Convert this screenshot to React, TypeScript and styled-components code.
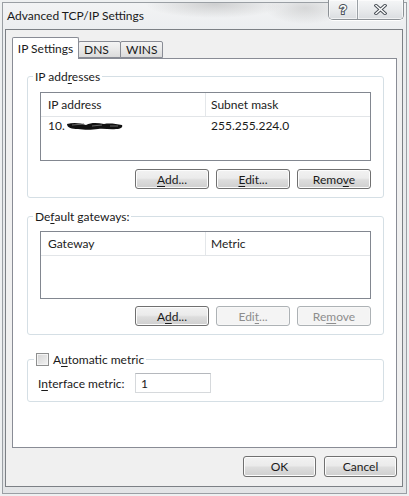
import React from "react";
import styled, { createGlobalStyle } from "styled-components";

const Global = createGlobalStyle`
  html, body { margin: 0; padding: 0; }
  body {
    width: 409px; height: 496px; overflow: hidden;
    background: #e6e8ea;
    font-family: Lato, "Liberation Sans", sans-serif;
    font-size: 12px; color: #1a1a1a;
  }
  * { box-sizing: border-box; }
`;

const Window = styled.div`
  width: 409px; height: 496px;
  display: flex; flex-direction: column;
  background:
    radial-gradient(ellipse 70px 14px at 215px 4px, rgba(140,140,140,0.35), transparent),
    radial-gradient(ellipse 40px 16px at 305px 8px, rgba(150,150,150,0.3), transparent),
    linear-gradient(180deg, #f3f4f5 0%, #eceef0 30px, #e2e4e6 100%);
  box-shadow: inset 0 0 0 2px #eef0f1, inset 0 0 0 3px #9a9fa4;
`;

const TitleBar = styled.div`
  height: 29px; display: flex; align-items: center; padding-left: 7px;
`;

const Title = styled.span`
  font-size: 12px; color: #1a1a1a; margin-top: 1px;
`;

const CaptionGroup = styled.div`
  display: flex; align-self: flex-start; margin-left: auto; margin-right: 5px;
  border: 1px solid #8c9196; border-top: none; border-radius: 0 0 5px 5px;
  overflow: hidden; box-shadow: 0 1px 0 rgba(255,255,255,0.9);
`;

const CaptionButton = styled.div<{ $w: number }>`
  width: ${(p) => p.$w}px; height: 19px;
  display: flex; align-items: center; justify-content: center;
  background: linear-gradient(180deg, #f5f6f7 0%, #e9ebed 50%, #dadde0 100%);
  box-shadow: inset 0 0 0 1px rgba(255,255,255,0.6);
  & + & { border-left: 1px solid #9aa0a5; }
`;

const Client = styled.div`
  margin-left: 5px; width: 398px; height: 458px;
  border: 1px solid #7c8085; background: #f0f0f0;
  display: flex; flex-direction: column;
`;

const TabStrip = styled.div`
  display: flex; align-items: flex-end; height: 21px; margin-top: 7px; padding-left: 6px;
`;

const Tab = styled.div<{ $active?: boolean; $w: number }>`
  width: ${(p) => p.$w}px;
  height: ${(p) => (p.$active ? 22 : 17)}px;
  margin-bottom: ${(p) => (p.$active ? -1 : 0)}px;
  margin-left: ${(p) => (p.$active ? 0 : -1)}px;
  position: relative; z-index: ${(p) => (p.$active ? 2 : 1)};
  border: 1px solid #898c95; border-bottom: ${(p) => (p.$active ? "none" : "1px solid #898c95")};
  border-radius: 2px 2px 0 0;
  background: ${(p) => (p.$active ? "#fff" : "linear-gradient(180deg, #f4f4f4 0%, #e9e9e9 50%, #dbdbdb 100%)")};
  display: flex; align-items: ${(p) => (p.$active ? "flex-start" : "center")};
  justify-content: ${(p) => (p.$active ? "center" : "flex-start")};
  padding-left: ${(p) => (p.$active ? 0 : 5)}px;
  padding-top: ${(p) => (p.$active ? 3 : 0)}px;
  color: #1a1a1a;
`;

const Panel = styled.div`
  margin-left: 6px; width: 385px; height: 390px;
  border: 1px solid #898c95; background: #fff;
  padding: 10px 12px 0 14px;
  display: flex; flex-direction: column;
`;

const Group = styled.fieldset<{ $gap: number; $padTop?: number; $padSide?: number }>`
  margin: ${(p) => p.$gap}px 0 0 0;
  padding: ${(p) => p.$padTop ?? 8}px ${(p) => p.$padSide ?? 12}px 8px;
  border: 1px solid #d5dfe5; border-radius: 3px;
  display: flex; flex-direction: column; min-width: 0;
`;

const Legend = styled.legend<{ $indent: number }>`
  margin-left: ${(p) => p.$indent}px; padding: 0 2px;
  line-height: 15px; color: #1a1a1a;
  display: flex; align-items: center; gap: 4px;
`;

const Key = styled.span`
  text-decoration: underline; text-underline-offset: 2px;
`;

const ListBox = styled.div<{ $h: number }>`
  height: ${(p) => p.$h}px; border: 1px solid #828790; background: #fff;
  display: flex; flex-direction: column;
`;

const ListRow = styled.div<{ $header?: boolean }>`
  display: grid; grid-template-columns: 165px 1fr;
  height: ${(p) => (p.$header ? 24 : 17)}px;
  border-bottom: ${(p) => (p.$header ? "1px solid #e2e5e8" : "none")};
  align-items: stretch;
`;

const Cell = styled.div<{ $header?: boolean; $first?: boolean }>`
  display: flex; align-items: center;
  padding-left: ${(p) => (p.$first ? 7 : 5)}px;
  color: ${(p) => (p.$header ? "#222" : "#1a1a1a")};
  border-right: ${(p) => (p.$header && p.$first ? "1px solid #e4e7ea" : "none")};
  white-space: nowrap;
`;

const ButtonRow = styled.div<{ $mt: number; $gap: number }>`
  display: flex; justify-content: flex-end; gap: ${(p) => p.$gap}px; margin-top: ${(p) => p.$mt}px;
`;

const Button = styled.div<{ $disabled?: boolean; $w: number; $h: number }>`
  width: ${(p) => p.$w}px; height: ${(p) => p.$h}px;
  display: flex; align-items: center; justify-content: center;
  border: 1px solid ${(p) => (p.$disabled ? "#adb2b5" : "#707070")};
  border-radius: 3px;
  color: ${(p) => (p.$disabled ? "#8d8d8d" : "#1a1a1a")};
  background: ${(p) =>
    p.$disabled
      ? "#f4f4f4"
      : "linear-gradient(180deg, #f2f2f2 0%, #ebebeb 45%, #dddddd 55%, #cfcfcf 100%)"};
  box-shadow: inset 0 0 0 1px ${(p) => (p.$disabled ? "#f7f7f7" : "#fcfcfc")};
`;

const CheckBox = styled.span`
  width: 13px; height: 13px; display: inline-block;
  border: 1px solid #8e8f8f;
  background: linear-gradient(135deg, #d4d4d4 0%, #e6e6e6 60%, #f4f4f4 100%);
  box-shadow: inset 0 0 0 1px #f4f4f4;
`;

const FieldRow = styled.div`
  display: flex; align-items: center;
`;

const FieldLabel = styled.span`
  width: 97px;
`;

const TextBox = styled.div`
  width: 76px; height: 20px; display: flex; align-items: center; padding-left: 5px;
  border: 1px solid #d6d9dc; border-top-color: #b5b8bd; background: #fff;
`;

const Footer = styled.div`
  display: flex; justify-content: flex-end; gap: 8px; margin-top: 8px; padding-right: 5px;
`;

const Scribble = () => (
  <svg width="58" height="10" viewBox="0 0 58 10" style={{ marginLeft: 1 }}>
    <path d="M1 3 C8 1 14 2 20 4 C26 1 32 2 38 3 C44 2 50 3 56 4 C57 6 55 8 50 8 C44 9 38 7 32 8 C26 9 18 9 12 8 C6 8 1 7 1 3 Z" fill="#111" />
    <path d="M6 4 L18 3 M26 5 L36 4 M44 5 L52 5" stroke="#666" strokeWidth="1" />
  </svg>
);

const CloseGlyph = () => (
  <svg width="13" height="11" viewBox="0 0 13 11">
    <path d="M2 1.5 L11 9.5 M11 1.5 L2 9.5" stroke="#4d535a" strokeWidth="3.4" strokeLinecap="square" />
    <path d="M2 1.5 L11 9.5 M11 1.5 L2 9.5" stroke="#fff" strokeWidth="1.4" strokeLinecap="square" />
  </svg>
);

const HelpGlyph = () => (
  <svg width="10" height="13" viewBox="0 0 10 13">
    <text x="5" y="11" textAnchor="middle" fontFamily="Liberation Sans, sans-serif" fontWeight="bold" fontSize="12.5"
      fill="#fff" stroke="#4d535a" strokeWidth="2" paintOrder="stroke">?</text>
  </svg>
);

export default function App() {
  return (
    <>
      <Global />
      <Window>
        <TitleBar>
          <Title>Advanced TCP/IP Settings</Title>
          <CaptionGroup>
            <CaptionButton $w={28}><HelpGlyph /></CaptionButton>
            <CaptionButton $w={46}><CloseGlyph /></CaptionButton>
          </CaptionGroup>
        </TitleBar>
        <Client>
          <TabStrip>
            <Tab $active $w={67}>IP Settings</Tab>
            <Tab $w={43}>DNS</Tab>
            <Tab $w={43}>WINS</Tab>
          </TabStrip>
          <Panel>
            <Group $gap={0}>
              <Legend $indent={-7}>
                <span>IP add<Key>r</Key>esses</span>
              </Legend>
              <ListBox $h={69}>
                <ListRow $header>
                  <Cell $header $first>IP address</Cell>
                  <Cell $header>Subnet mask</Cell>
                </ListRow>
                <ListRow>
                  <Cell $first>10.<Scribble /></Cell>
                  <Cell>255.255.224.0</Cell>
                </ListRow>
              </ListBox>
              <ButtonRow $mt={8} $gap={7}>
                <Button $w={74} $h={20}><span><Key>A</Key>dd...</span></Button>
                <Button $w={74} $h={20}><span><Key>E</Key>dit...</span></Button>
                <Button $w={74} $h={20}><span>Remo<Key>v</Key>e</span></Button>
              </ButtonRow>
            </Group>
            <Group $gap={11} $padTop={7}>
              <Legend $indent={-7}>
                <span>De<Key>f</Key>ault gateways:</span>
              </Legend>
              <ListBox $h={68}>
                <ListRow $header>
                  <Cell $header $first>Gateway</Cell>
                  <Cell $header>Metric</Cell>
                </ListRow>
              </ListBox>
              <ButtonRow $mt={7} $gap={7}>
                <Button $w={74} $h={20}><span>A<Key>d</Key>d...</span></Button>
                <Button $disabled $w={74} $h={20}><span>Edi<Key>t</Key>...</span></Button>
                <Button $disabled $w={74} $h={20}><span>Re<Key>m</Key>ove</span></Button>
              </ButtonRow>
            </Group>
            <Group $gap={17} $padTop={6} $padSide={10}>
              <Legend $indent={-4}>
                <CheckBox />
                <span>A<Key>u</Key>tomatic metric</span>
              </Legend>
              <FieldRow>
                <FieldLabel>I<Key>n</Key>terface metric:</FieldLabel>
                <TextBox>1</TextBox>
              </FieldRow>
            </Group>
          </Panel>
          <Footer>
            <Button $w={73} $h={21}>OK</Button>
            <Button $w={73} $h={21}>Cancel</Button>
          </Footer>
        </Client>
      </Window>
    </>
  );
}
